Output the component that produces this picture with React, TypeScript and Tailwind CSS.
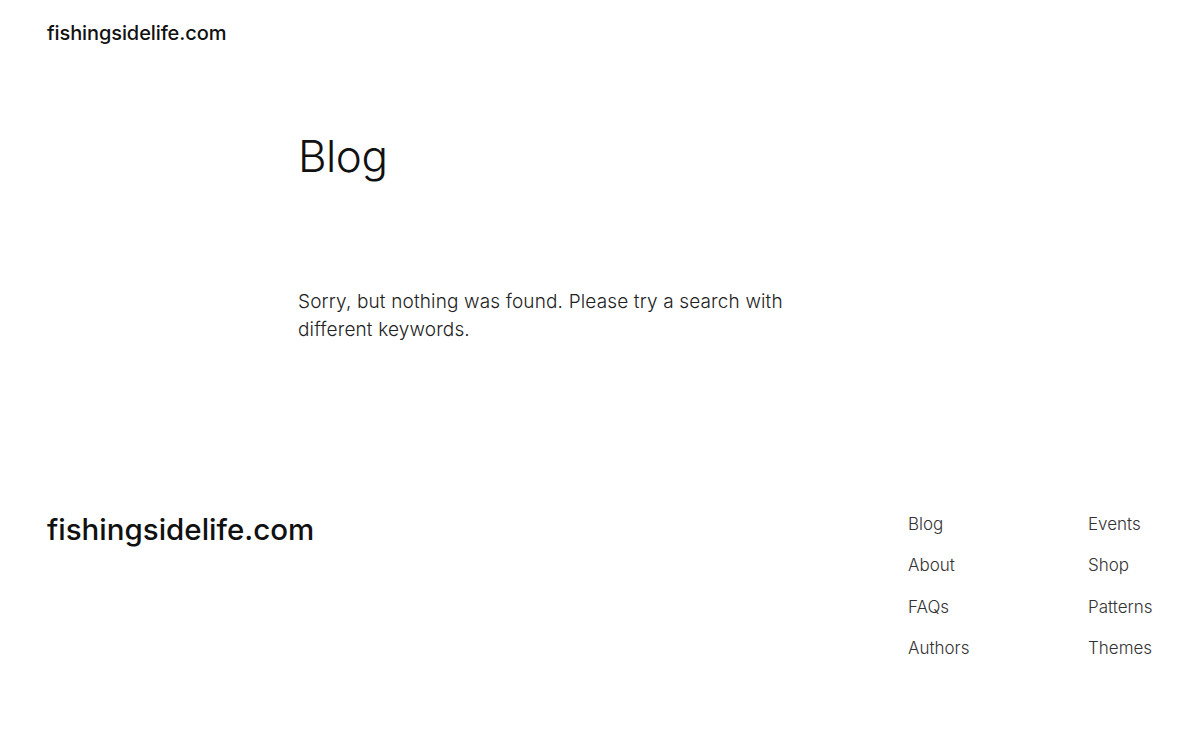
export default function App() {
  const left = ["Blog", "About", "FAQs", "Authors"];
  const right = ["Events", "Shop", "Patterns", "Themes"];
  return (
    <div className="min-h-[750px] w-[1200px] bg-white text-[#111] font-['Inter',sans-serif]">
      <header className="px-[47px] pt-[18px]">
        <a className="text-[20px] font-medium tracking-[-0.1px]">fishingsidelife.com</a>
      </header>
      <main className="pl-[298px] pt-[86px]">
        <h1 className="text-[44px] font-light leading-none tracking-[-0.5px]">Blog</h1>
        <p className="mt-[110px] w-[500px] text-[19px] font-light leading-[28px] tracking-[0.15px] text-[#222]">
          Sorry, but nothing was found. Please try a search with different keywords.
        </p>
      </main>
      <footer className="mt-[171px] flex justify-between px-[47px]">
        <div className="text-[29.5px] font-medium leading-none">fishingsidelife.com</div>
        <nav className="-mt-[2px] flex gap-[60px]">
          <ul className="flex w-[120px] flex-col gap-[18.4px]">
            {left.map((l) => (
              <li key={l} className="text-[17px] font-light leading-[23px] text-[#333]">{l}</li>
            ))}
          </ul>
          <ul className="flex w-[65px] flex-col gap-[18.4px]">
            {right.map((l) => (
              <li key={l} className="text-[17px] font-light leading-[23px] text-[#333]">{l}</li>
            ))}
          </ul>
        </nav>
      </footer>
    </div>
  );
}
